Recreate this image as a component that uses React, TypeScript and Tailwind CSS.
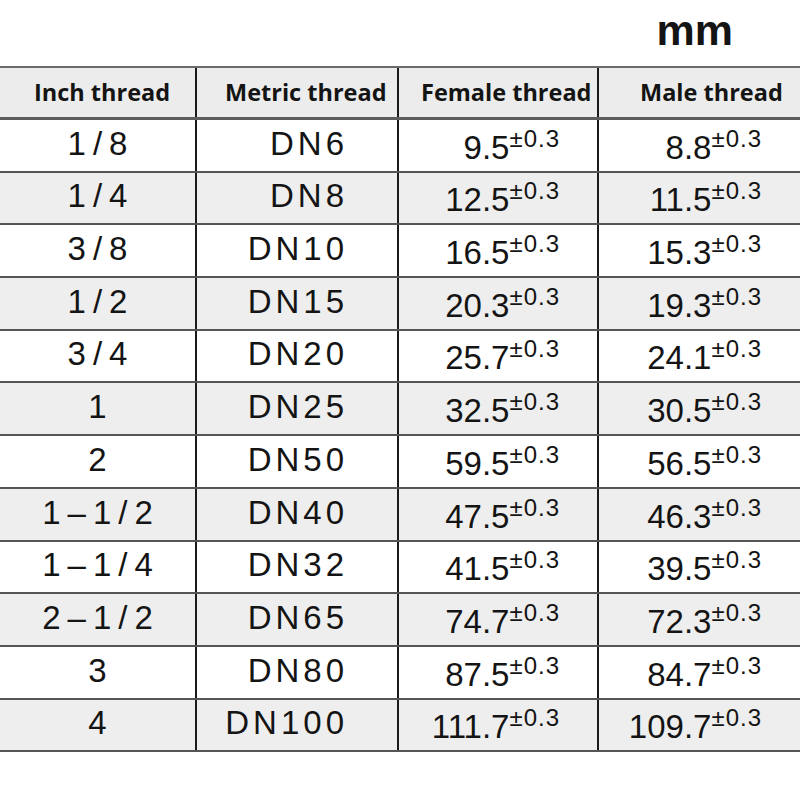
const rows: [string, string, string, string][] = [
  ["1/8", "DN6", "9.5", "8.8"],
  ["1/4", "DN8", "12.5", "11.5"],
  ["3/8", "DN10", "16.5", "15.3"],
  ["1/2", "DN15", "20.3", "19.3"],
  ["3/4", "DN20", "25.7", "24.1"],
  ["1", "DN25", "32.5", "30.5"],
  ["2", "DN50", "59.5", "56.5"],
  ["1–1/2", "DN40", "47.5", "46.3"],
  ["1–1/4", "DN32", "41.5", "39.5"],
  ["2–1/2", "DN65", "74.7", "72.3"],
  ["3", "DN80", "87.5", "84.7"],
  ["4", "DN100", "111.7", "109.7"],
];

function Tol({ value }: { value: string }) {
  return (
    <span className="whitespace-nowrap">
      {value}
      <span className="relative bottom-[12px] text-[24px] tracking-[1px]">±0.3</span>
    </span>
  );
}

export default function App() {
  return (
    <div className="w-[800px] h-[800px] bg-white text-[#141414] font-['Liberation_Sans',Arial,sans-serif] overflow-hidden">
      <div className="h-[66px] flex justify-end pr-[67px] pt-[9px]">
        <span className="text-[43px] font-bold leading-none">mm</span>
      </div>

      <div className="border-t-2 border-[#6a6a6a]">
        <div className="grid grid-cols-[197px_202px_200px_201px] h-[52px] bg-[#ececec] border-b-[3px] border-[#5c5c5c] font-['Open_Sans',sans-serif] font-bold text-[23.5px]">
          <div className="flex items-center pl-[34px] border-r-2 border-[#1a1a1a]">Inch thread</div>
          <div className="flex items-center pl-[28px] border-r-2 border-[#1a1a1a]">Metric thread</div>
          <div className="flex items-center pl-[22px] border-r-2 border-[#1a1a1a]">Female thread</div>
          <div className="flex items-center pl-[41px]">Male thread</div>
        </div>

        {rows.map(([inch, metric, female, male], i) => (
          <div
            key={inch}
            className={`grid grid-cols-[197px_202px_200px_201px] h-[52.7px] border-b-2 border-[#555555] text-[33px] leading-none ${
              i % 2 === 1 ? "bg-[#eeeeee]" : "bg-white"
            }`}
          >
            <div className="flex items-end justify-center pb-[11px] pl-[7px] tracking-[7px] border-r-2 border-[#1a1a1a]">
              {inch}
            </div>
            <div className="flex items-end justify-end pb-[11px] pr-[49px] tracking-[4px] border-r-2 border-[#1a1a1a]">
              {metric}
            </div>
            <div className="flex items-end justify-end pb-[7px] pr-[37px] border-r-2 border-[#1a1a1a]">
              <Tol value={female} />
            </div>
            <div className="flex items-end justify-end pb-[7px] pr-[38px]">
              <Tol value={male} />
            </div>
          </div>
        ))}
      </div>
    </div>
  );
}
